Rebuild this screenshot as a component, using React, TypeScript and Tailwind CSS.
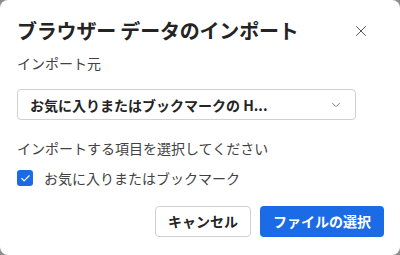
import { Check, ChevronDown, X } from "lucide-react";

export default function App() {
  return (
    <div className="w-[400px] h-[255px] bg-[#8c8c8c]">
      <div
        className="w-full h-full bg-white rounded-[8px] flex flex-col px-[17px] pt-[17px] text-[#242424]"
        style={{ fontFamily: '"Noto Sans CJK JP", "Noto Sans", sans-serif' }}
      >
        <div className="flex items-center justify-between h-[28px]">
          <h1 className="text-[20px] leading-[28px] font-bold tracking-[-0.2px]">
            ブラウザー データのインポート
          </h1>
          <button type="button" className="mr-[13px] text-[#424242]">
            <X size={18} strokeWidth={1.2} />
          </button>
        </div>

        <p className="mt-[8px] text-[14px] leading-[20px] text-[#424242]">インポート元</p>

        <div className="mt-[16px] w-[339px] h-[31px] border border-[#d1d1d1] rounded-[4px] flex items-center justify-between pl-[12px] pr-[12px]">
          <span className="text-[14px] font-bold leading-[20px]">
            お気に入りまたはブックマークの H...
          </span>
          <ChevronDown size={14} strokeWidth={1.3} className="text-[#616161]" />
        </div>

        <p className="mt-[18px] text-[14px] leading-[20px] text-[#424242]">
          インポートする項目を選択してください
        </p>

        <label className="mt-[10px] flex items-center gap-[11px]">
          <span className="w-[16px] h-[16px] rounded-[3px] bg-[#1c6be6] flex items-center justify-center">
            <Check size={11} strokeWidth={2.5} className="text-white" />
          </span>
          <span className="text-[14px] leading-[20px] text-[#424242]">
            お気に入りまたはブックマーク
          </span>
        </label>

        <div className="mt-[18px] flex justify-end gap-[9px] mr-[-1px]">
          <button
            type="button"
            className="w-[96px] h-[31px] border border-[#d1d1d1] rounded-[4px] text-[14px] font-bold"
          >
            キャンセル
          </button>
          <button
            type="button"
            className="w-[124px] h-[31px] rounded-[4px] bg-[#1c6be6] text-white text-[14px] font-bold"
          >
            ファイルの選択
          </button>
        </div>
      </div>
    </div>
  );
}
